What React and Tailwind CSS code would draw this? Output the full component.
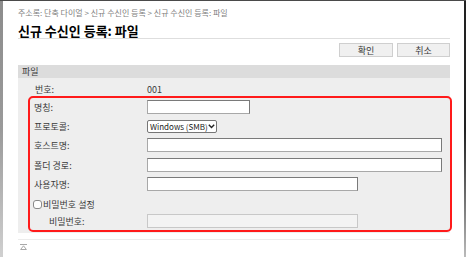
import React from "react";

const font = { fontFamily: '"Noto Sans CJK KR", "Noto Sans", sans-serif' };

function Field({ label, children, labelClass = "pl-[4px]" }) {
  return (
    <div className="flex items-center h-[14px]">
      <div className={`w-[117px] shrink-0 leading-none ${labelClass}`}>{label}</div>
      {children}
    </div>
  );
}

function TextBox({ w, disabled }) {
  return (
    <div
      className={`h-[14px] border ${
        disabled
          ? "bg-[#f3f3f3] border-[#c8c8c8]"
          : "bg-white border-[#a8a8a8] border-t-[#7a7a7a] border-r-[#7a7a7a]"
      } ${w}`}
    />
  );
}

export default function App() {
  return (
    <div
      className="w-[466px] h-[257px] bg-white flex border-t border-[#4a4a4a] overflow-hidden text-[9px] text-[#3a3a3a]"
      style={font}
    >
      <div className="w-[3px] shrink-0 bg-gradient-to-b from-[#8c8c8c] via-[#9a9a9a] to-[#d0d0d0]" />
      <div className="flex-1 pl-[15px] pr-[14px] flex flex-col">
        <div className="mt-[7px] h-[10px] leading-[10px] text-[8px] text-[#808080] whitespace-nowrap">
          주소록: 단축 다이얼 &gt; 신규 수신인 등록 &gt; 신규 수신인 등록: 파일
        </div>
        <div className="mt-[6px] h-[14px] leading-[14px] text-[13px] font-bold text-black border-b border-[#dedede] box-content">
          신규 수신인 등록: 파일
        </div>
        <div className="mt-[4px] flex justify-end gap-[4px]">
          <div className="w-[54px] h-[14px] bg-[#f0f0f0] border border-[#cfcfcf] flex items-center justify-center leading-none">
            확인
          </div>
          <div className="w-[53px] h-[14px] bg-[#f0f0f0] border border-[#cfcfcf] flex items-center justify-center leading-none">
            취소
          </div>
        </div>
        <div className="mt-[8px] h-[13px] bg-[#dcdcdc] pl-[4px] flex items-center leading-none">
          파일
        </div>
        <div className="bg-[#eeeeee] pt-[5px] pb-[1px]">
          <div className="flex items-center h-[12px] leading-none">
            <div className="w-[129px] pl-[17px] shrink-0">번호:</div>
            <div>001</div>
          </div>
          <div className="mt-[1px] ml-[10px] -mr-[2px] border-2 border-[#ff1a1a] rounded-[5px] pt-[2px] pb-[2px] flex flex-col">
            <Field label="명칭:">
              <TextBox w="w-[103px]" />
            </Field>
            <div className="mt-[6px] flex items-center h-[13px]">
              <div className="w-[117px] pl-[4px] shrink-0 leading-none">프로토콜:</div>
              <div className="w-[70px] h-[13px] bg-white border border-[#767676] rounded-[2px] flex items-center justify-between pl-[2px] pr-[2px] text-[#222] whitespace-nowrap">
                <span className="leading-none text-[8px]">Windows (SMB)</span>
                <svg width="7" height="5" viewBox="0 0 7 5" className="shrink-0">
                  <path d="M0.8 0.8 L3.5 3.6 L6.2 0.8" fill="none" stroke="#222" strokeWidth="1.4" />
                </svg>
              </div>
            </div>
            <div className="mt-[5px]">
              <Field label="호스트명:">
                <TextBox w="w-[295px]" />
              </Field>
            </div>
            <div className="mt-[6px]">
              <Field label="폴더 경로:">
                <TextBox w="w-[295px]" />
              </Field>
            </div>
            <div className="mt-[5px]">
              <Field label="사용자명:">
                <TextBox w="w-[211px]" />
              </Field>
            </div>
            <div className="mt-[6px] h-[14px] flex items-center pl-[3px]">
              <div className="w-[9px] h-[9px] bg-white border border-[#8a8a8a] rounded-[3px] mr-[1px]" />
              <span className="leading-none">비밀번호 설정</span>
            </div>
            <div className="mt-[3px]">
              <Field label="비밀번호:" labelClass="pl-[19px]">
                <TextBox w="w-[211px]" disabled />
              </Field>
            </div>
          </div>
        </div>
        <div className="mt-[6px] border-t border-[#ececec]" />
        <div className="mt-[4px] pl-[2px]">
          <svg width="7" height="6" viewBox="0 0 7 6">
            <rect x="0" y="0" width="7" height="1" fill="#a8a8a8" />
            <path d="M3.5 1.8 L6.4 5.5 L0.6 5.5 Z" fill="none" stroke="#a8a8a8" strokeWidth="1" />
          </svg>
        </div>
      </div>
      <div className="w-[2px] shrink-0 bg-gradient-to-b from-[#222] via-[#222] to-[#bbb]" />
    </div>
  );
}
